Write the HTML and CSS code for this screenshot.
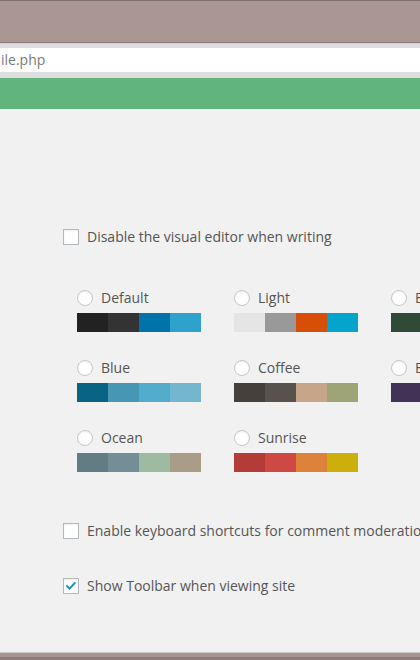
FILE: index.html
```html
<!DOCTYPE html>
<html>
<head>
<meta charset="utf-8">
<link rel="stylesheet" href="styles.css">
</head>
<body>
<div class="frame-top"></div>
<div class="address-area"><div class="address">ile.php</div></div>
<div class="adminbar"></div>
<main class="content">
  <div class="check-row first">
    <span class="box"></span><span class="label">Disable the visual editor when writing</span>
  </div>
  <div class="schemes">
    <div class="scheme">
      <div class="radio-row"><span class="radio"></span><span class="label">Default</span></div>
      <div class="palette"><span style="background:#222"></span><span style="background:#333"></span><span style="background:#0073aa"></span><span style="background:#2ea2cc"></span></div>
    </div>
    <div class="scheme">
      <div class="radio-row"><span class="radio"></span><span class="label">Light</span></div>
      <div class="palette"><span style="background:#e5e5e5"></span><span style="background:#999"></span><span style="background:#d64e07"></span><span style="background:#04a4cc"></span></div>
    </div>
    <div class="scheme">
      <div class="radio-row"><span class="radio"></span><span class="label">Emerald</span></div>
      <div class="palette"><span style="background:#304a38"></span><span style="background:#3d5a45"></span><span style="background:#6a9a5a"></span><span style="background:#9fc36a"></span></div>
    </div>
    <div class="scheme">
      <div class="radio-row"><span class="radio"></span><span class="label">Blue</span></div>
      <div class="palette"><span style="background:#096484"></span><span style="background:#4796b3"></span><span style="background:#52accc"></span><span style="background:#74b6ce"></span></div>
    </div>
    <div class="scheme">
      <div class="radio-row"><span class="radio"></span><span class="label">Coffee</span></div>
      <div class="palette"><span style="background:#46403c"></span><span style="background:#59524c"></span><span style="background:#c7a589"></span><span style="background:#9ea476"></span></div>
    </div>
    <div class="scheme">
      <div class="radio-row"><span class="radio"></span><span class="label">Ectoplasm</span></div>
      <div class="palette"><span style="background:#413256"></span><span style="background:#523f6d"></span><span style="background:#a3b745"></span><span style="background:#d46f15"></span></div>
    </div>
    <div class="scheme">
      <div class="radio-row"><span class="radio"></span><span class="label">Ocean</span></div>
      <div class="palette"><span style="background:#627c83"></span><span style="background:#738e96"></span><span style="background:#9ebaa0"></span><span style="background:#aa9d88"></span></div>
    </div>
    <div class="scheme">
      <div class="radio-row"><span class="radio"></span><span class="label">Sunrise</span></div>
      <div class="palette"><span style="background:#b43c38"></span><span style="background:#cf4944"></span><span style="background:#dd823b"></span><span style="background:#ccaf0b"></span></div>
    </div>
  </div>
  <div class="check-row kb">
    <span class="box"></span><span class="label">Enable keyboard shortcuts for comment moderation</span>
  </div>
  <div class="check-row tb">
    <span class="box checked"><svg viewBox="0 0 16 16" width="14" height="14"><path d="M3.5 8.2 L6.4 11 L12.2 4.6" fill="none" stroke="#1e8cbe" stroke-width="2.2" stroke-linecap="square"/></svg></span><span class="label">Show Toolbar when viewing site</span>
  </div>
</main>
<div class="frame-bottom"></div>
</body>
</html>
```
FILE: styles.css
```css
* { box-sizing: border-box; }
html, body { margin: 0; padding: 0; }
body {
  width: 420px;
  height: 660px;
  overflow: hidden;
  display: flex;
  flex-direction: column;
  background: #f1f1f1;
  font-family: "Open Sans", "Noto Sans", sans-serif;
  color: #555;
}
.frame-top {
  height: 43px;
  flex: none;
  background: #aa9793;
  border-top: 1px solid #7d6f6c;
  border-bottom: 1px solid #8f7f7c;
}
.address-area {
  height: 35px;
  flex: none;
  background: #dedede;
  padding: 4px 0 6px;
  border-top: 1px solid #cfcfcf;
}
.address {
  height: 24px;
  background: #fff;
  font-size: 14px;
  line-height: 24px;
  color: #7a7a7a;
  padding-left: 1px;
  white-space: nowrap;
}
.adminbar {
  height: 31px;
  flex: none;
  background: #60b47c;
}
.content {
  flex: 1;
  padding: 120px 0 0 63px;
  display: flex;
  flex-direction: column;
  align-items: flex-start;
}
.check-row, .radio-row {
  display: flex;
  align-items: center;
  height: 16px;
  white-space: nowrap;
}
.label {
  font-size: 14px;
  line-height: 16px;
  color: #555;
}
.box {
  width: 16px;
  height: 16px;
  flex: none;
  margin-right: 8px;
  background: #fff;
  border: 1px solid #b4b9be;
  box-shadow: inset 0 1px 2px rgba(0,0,0,.07);
  display: flex;
  align-items: center;
  justify-content: center;
}
.radio {
  width: 16px;
  height: 16px;
  flex: none;
  margin-right: 8px;
  background: #fff;
  border: 1px solid #c4c8cc;
  border-radius: 50%;
  box-shadow: inset 0 1px 2px rgba(0,0,0,.07);
}
.schemes {
  margin: 45px 0 0 14px;
  display: grid;
  grid-template-columns: 124px 124px 124px;
  column-gap: 33px;
  row-gap: 28px;
}
.palette {
  display: flex;
  margin-top: 7px;
  height: 19px;
  width: 124px;
}
.palette span {
  flex: 1;
  height: 19px;
}
.check-row.kb { margin-top: 51px; }
.check-row.tb { margin-top: 39px; }
.frame-bottom {
  height: 8px;
  flex: none;
  background: #a89592;
  border-top: 1px solid #cfcaca;
  border-bottom: 3px solid #8c7b78;
}
```
